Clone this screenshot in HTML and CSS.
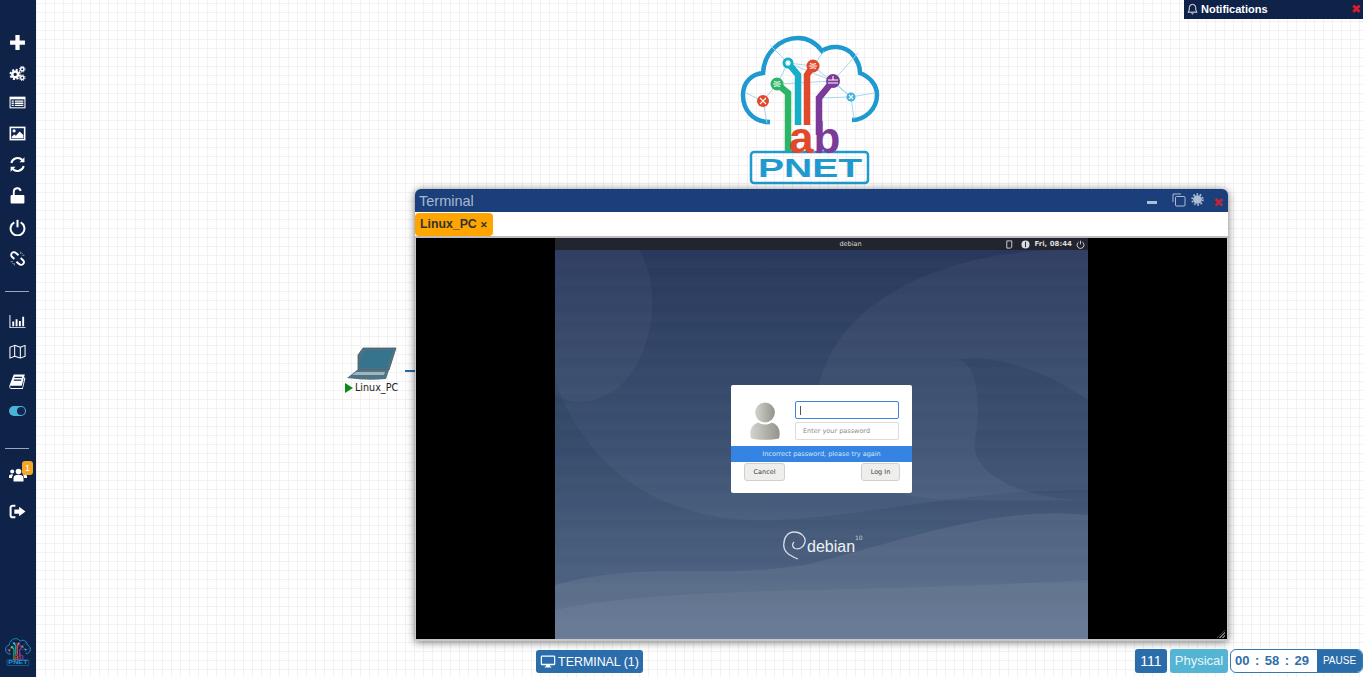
FILE: index.html
```html
<!DOCTYPE html>
<html lang="en">
<head>
    <meta charset="UTF-8">
    <title>PNETLab</title>
    <link rel="stylesheet" href="styles.css">
</head>
<body>
    <nav class="sidebar">
        <a class="side-btn">
            <svg viewBox="0 0 16 16"><path d="M6 1h4v5h5v4h-5v5H6v-5H1V6h5z" fill="#fff"/></svg>
        </a>
        <a class="side-btn">
            <svg viewBox="0 0 18 18">
                <circle cx="6.500" cy="10" r="3" fill="none" stroke="#fff" stroke-width="2.500"/>
                <circle cx="6.500" cy="10" r="5" fill="none" stroke="#fff" stroke-width="2" stroke-dasharray="2.200 1.730"/>
                <circle cx="14" cy="4.500" r="1.800" fill="none" stroke="#fff" stroke-width="1.500"/>
                <circle cx="14" cy="13.500" r="1.800" fill="none" stroke="#fff" stroke-width="1.500"/>
                <circle cx="14" cy="4.500" r="3" fill="none" stroke="#fff" stroke-width="1" stroke-dasharray="1.300 1.050"/>
                <circle cx="14" cy="13.500" r="3" fill="none" stroke="#fff" stroke-width="1" stroke-dasharray="1.300 1.050"/>
            </svg>
        </a>
        <a class="side-btn up2">
            <svg viewBox="0 0 16 16">
                <path d="M0.500 2.500h15v11h-15z" fill="#fff"/>
                <path d="M1.500 5h13v7.500h-13z" fill="#12264f"/>
                <path d="M2.500 6h2v1.200h-2zM2.500 8.100h2v1.200h-2zM2.500 10.200h2v1.200h-2zM5.500 6h8v1.200h-8zM5.500 8.100h8v1.200h-8zM5.500 10.200h8v1.200h-8z" fill="#fff"/>
            </svg>
        </a>
        <a class="side-btn">
            <svg viewBox="0 0 16 16">
                <path d="M0.500 1.500h15v13h-15z" fill="#fff"/>
                <path d="M2 3h12v10H2z" fill="#12264f"/>
                <circle cx="4.800" cy="5.500" r="1.500" fill="#fff"/>
                <path d="M2.500 12.500v-1.500l2.500-2 1.500 1 3.500-4 3.500 3.500v3z" fill="#fff"/>
            </svg>
        </a>
        <a class="side-btn">
            <svg viewBox="0 0 16 16" fill="none" stroke="#fff" stroke-width="1.900">
                <path d="M2.200 6.500A6 6 0 0 1 12.500 3.800"/>
                <path d="M13.800 9.500A6 6 0 0 1 3.500 12.200"/>
                <path d="M14.500 1.200v4.600h-4.600z" fill="#fff" stroke="none"/>
                <path d="M1.500 14.800v-4.600h4.600z" fill="#fff" stroke="none"/>
            </svg>
        </a>
        <a class="side-btn">
            <svg viewBox="0 0 16 16">
                <path d="M2.500 7.500h11a1 1 0 0 1 1 1v6a1 1 0 0 1-1 1h-11a1 1 0 0 1-1-1v-6a1 1 0 0 1 1-1z" fill="#fff"/>
                <path d="M4.500 7.500V4.500a3.300 3.300 0 0 1 6.500-0.800" fill="none" stroke="#fff" stroke-width="1.800"/>
            </svg>
        </a>
        <a class="side-btn down1">
            <svg viewBox="0 0 16 16" fill="none" stroke="#fff" stroke-width="1.900">
                <path d="M5 3.200a6.500 6.500 0 1 0 6 0"/>
                <path d="M8 0.800v7"/>
            </svg>
        </a>
        <a class="side-btn">
            <svg viewBox="0 0 16 16" fill="none" stroke="#fff" stroke-width="1.800">
                <path d="M9 5L6.500 2.800a2.500 2.500 0 0 0-3.700 3.600L5 8.500"/>
                <path d="M7 11l2.500 2.200a2.500 2.500 0 0 0 3.700-3.600L11 7.500"/>
                <path d="M11 1.500v2M14.500 5h-2M12.800 2.800l-1 1M5 14.500v-2M1.500 11h2M3.200 13.200l1-1" stroke="#9fb0cc" stroke-width="0.800"/>
            </svg>
        </a>

        <hr class="side-line first">

        <a class="side-btn short">
            <svg viewBox="0 0 18 16">
                <path d="M0.500 1h1v13h16v1h-17z" fill="#fff"/>
                <path d="M3.500 8h2v5h-2zM7 5.500h2V13H7zM10.500 7.500h2V13h-2zM14 3h2v10h-2z" fill="#fff"/>
            </svg>
        </a>
        <a class="side-btn short">
            <svg viewBox="0 0 18 16" fill="none" stroke="#fff" stroke-width="1.100" stroke-linejoin="round">
                <path d="M1 3.500l5-2 6 2 5-2v11.500l-5 2-6-2-5 2z"/>
                <path d="M6 1.500v11.500M12 3.500v11.500"/>
            </svg>
        </a>
        <a class="side-btn short">
            <svg viewBox="0 0 16 16">
                <path d="M4.500 1.500h10.500l-0.500 1-2.500 9.500H1.500c-1 1.300-0.500 2 0.500 2h10.500l0.300-1 1.700-9 1 .7-2.500 10.300H2C0.500 15 0 13 0.500 11.500z" fill="#fff"/>
                <path d="M5.300 3.500l-0.300 1.200h7l0.300-1.200zM4.700 6l-0.300 1.200h7l0.300-1.200z" fill="#12264f"/>
            </svg>
        </a>
        <a class="side-btn short">
            <span class="toggle"><span class="toggle-knob"></span></span>
        </a>

        <hr class="side-line second">

        <a class="side-btn users">
            <svg viewBox="0 0 18 16">
                <circle cx="9.500" cy="5" r="2.800" fill="#fff"/>
                <circle cx="3.200" cy="5" r="2" fill="#fff"/>
                <circle cx="15.300" cy="5" r="2" fill="#fff"/>
                <path d="M4.500 15v-3.500c0-2 2-3.200 5-3.200s5 1.200 5 3.200V15z" fill="#fff"/>
                <path d="M0 11.500v-1.500c0-1.500 1-2.300 3.300-2.300l0.700 0.600-1 2.200v1zM18 11.500v-1.500c0-1.500-1-2.300-3.300-2.300l-0.700 0.600 1 2.200v1z" fill="#fff"/>
            </svg>
            <span class="badge">1</span>
        </a>
        <a class="side-btn logout">
            <svg viewBox="0 0 16 16">
                <path d="M6 2.500H3.500A2 2 0 0 0 1.500 4.500v7a2 2 0 0 0 2 2H6" fill="none" stroke="#fff" stroke-width="1.900"/>
                <path d="M9.500 3.500l6 4.500-6 4.500V10H5V6h4.500z" fill="#fff"/>
            </svg>
        </a>

        <svg class="side-logo" viewBox="0 0 140 150"><use href="#pnetLogo"/></svg>
    </nav>

    <svg class="main-logo" viewBox="0 0 140 150">
        <g id="pnetLogo">
            <path d="M30 87C12 87 3 74 3 60C3 47 12 39 23 38C24 18 40 3 58 3C68 3 76 8 82 16C90 10 105 10 113 20C118 26 120 32 120 38C130 42 137 50 137 60C137 74 125 85 112 85" fill="none" stroke="#1f9ad1" stroke-width="4.500"/>
            <g fill="none" stroke="#9fd2ea" stroke-width="0.900">
                <path d="M6 58L23 66L37 49L48 28L30 10"/>
                <path d="M23 66L27 88"/>
                <path d="M48 28L73 31L84 16"/>
                <path d="M37 49L93 46L111 62L134 58"/>
                <path d="M48 28L93 46L118 18"/>
                <path d="M73 31L111 62L114 84"/>
                <path d="M77 63L111 62"/>
            </g>
            <g fill="none" stroke-width="6.500">
                <path d="M37 49L48 58V118" stroke="#2cb566"/>
                <path d="M48 28L58 40V90" stroke="#17afc7"/>
                <path d="M73 31L67 40V90" stroke="#e0492b"/>
                <path d="M93 46L79 63V100" stroke="#7c3b98"/>
            </g>
            <circle cx="23" cy="66" r="6" fill="#e0492b"/>
            <circle cx="37" cy="49" r="6.500" fill="#2cb566"/>
            <circle cx="48" cy="28" r="5.500" fill="#17afc7"/>
            <circle cx="73" cy="31" r="6.500" fill="#e0492b"/>
            <circle cx="93" cy="46" r="7" fill="#7c3b98"/>
            <circle cx="111" cy="62" r="4.500" fill="#3db5e0"/>
            <g stroke="#fff" stroke-width="1.100" fill="none">
                <path d="M20 63l6 6M26 63l-6 6"/>
                <path d="M33 49h8M34 46.500q3 1.500 6 0M34 51.500q3-1.500 6 0"/>
                <path d="M45 28h6M48 25v6M46 26l4 4M50 26l-4 4"/>
                <path d="M69 31h8M70 28.500q3 1.500 6 0M70 33.500q3-1.500 6 0"/>
                <path d="M88 45h10M88 48h10M93 41v4"/>
                <path d="M109 60l4 4M113 60l-4 4"/>
            </g>
            <rect x="11" y="117" width="117" height="31" rx="3" fill="none" stroke="#1f9ad1" stroke-width="2.500"/>
            <text class="logo-lab" x="49" y="118"><tspan class="lab-a">a</tspan><tspan class="lab-b">b</tspan></text>
            <text class="logo-pnet" x="18" y="142" textLength="104" lengthAdjust="spacingAndGlyphs">PNET</text>
        </g>
    </svg>

    <div class="notifications">
        <svg class="bell" viewBox="0 0 12 14" fill="none" stroke="#fff" stroke-width="1">
            <path d="M1 11c1.300-1 1.500-2.500 1.500-5a3.500 3.500 0 0 1 7 0c0 2.500 0.200 4 1.500 5z"/>
            <path d="M5 12.300a1.100 1.100 0 0 0 2 0"/>
        </svg>
        <span class="notif-title">Notifications</span>
        <span class="notif-close">&#10006;</span>
    </div>

    <div class="node">
        <svg class="node-icon" viewBox="0 0 50 34">
            <path d="M11 8L16 1H49L42 23H11Z" fill="#55717f" stroke="#3f5a68" stroke-width="0.800"/>
            <path d="M14 9L18 3H46L40 21H13Z" fill="#35748c"/>
            <path d="M0 31L10 23H42L39 32Q20 34 0 31Z" fill="#4f7383"/>
            <path d="M9 25H38L37 28H5Z" fill="#9db5c0"/>
        </svg>
        <div class="node-label"><span class="node-run"></span>Linux_PC</div>
    </div>
    <div class="node-link"></div>

    <section class="term-win">
        <header class="term-head">
            <span class="term-title">Terminal</span>
            <span class="win-tools">
                <span class="tool-min"></span>
                <svg class="tool-copy" viewBox="0 0 14 14" fill="none" stroke="#aebdd6" stroke-width="1">
                    <path d="M1 9V1h8"/>
                    <rect x="3.500" y="3.500" width="9.500" height="9.500" rx="1"/>
                </svg>
                <svg class="tool-gear" viewBox="0 0 14 14">
                    <circle cx="7" cy="7" r="4.700" fill="#aebdd6"/>
                    <circle cx="7" cy="7" r="5.700" fill="none" stroke="#aebdd6" stroke-width="2" stroke-dasharray="1.800 1.780"/>
                </svg>
                <span class="tool-close">&#10006;</span>
            </span>
        </header>
        <div class="term-tabs">
            <span class="term-tab">Linux_PC <small>&#10005;</small></span>
        </div>
        <div class="term-screen">
            <div class="desktop">
                <svg class="desk-art" viewBox="0 0 533 389" preserveAspectRatio="none">
                    <defs>
                        <linearGradient id="deskBg" x1="0" y1="0" x2="0" y2="1">
                            <stop offset="0" stop-color="#28385c"/>
                            <stop offset="0.5" stop-color="#3c5171"/>
                            <stop offset="1" stop-color="#5f7493"/>
                        </linearGradient>
                    </defs>
                    <rect width="533" height="389" fill="url(#deskBg)"/>
                    <path d="M0 0H85C105 40 100 90 75 125C55 150 25 160 0 145Z" fill="#fff" fill-opacity="0.035"/>
                    <path d="M0 130C30 220 110 275 220 270C330 265 400 240 533 240V389H0Z" fill="#0d1c3c" fill-opacity="0.1"/>
                    <path d="M533 0C410 -5 290 40 265 130C250 195 300 250 400 250H533Z" fill="#fff" fill-opacity="0.04"/>
                    <path d="M396 112C420 100 428 150 420 190C414 225 470 250 533 250V150C490 120 430 100 396 112Z" fill="#0d1c3c" fill-opacity="0.13"/>
                    <path d="M0 335C90 310 150 330 250 315C350 290 440 255 533 265V389H0Z" fill="#fff" fill-opacity="0.07"/>
                    <path d="M0 389V360C120 335 260 345 533 330V389Z" fill="#fff" fill-opacity="0.05"/>
                </svg>
                <div class="desk-top">
                    <span class="desk-name">debian</span>
                    <span class="desk-status">
                        <svg class="doc-icon" viewBox="0 0 8 10" fill="none" stroke="#ddd" stroke-width="1"><path d="M1 1h5.500v7L5 9H1z"/></svg>
                        <svg viewBox="0 0 10 10"><circle cx="5" cy="5" r="4.500" fill="#ddd"/><path d="M5 2v6" stroke="#26304a" stroke-width="1.200"/></svg>
                        <span>Fri, 08:44</span>
                        <svg viewBox="0 0 10 10" fill="none" stroke="#ddd" stroke-width="1"><path d="M3 2.300a3.800 3.800 0 1 0 4 0M5 0.800v4"/></svg>
                    </span>
                </div>
                <div class="login-box">
                    <div class="login-main">
                        <svg class="avatar" viewBox="0 0 34 40">
                            <defs>
                                <linearGradient id="userFill" x1="0" y1="0" x2="1" y2="0">
                                    <stop offset="0" stop-color="#d4d4ce"/>
                                    <stop offset="1" stop-color="#93938c"/>
                                </linearGradient>
                            </defs>
                            <circle cx="17" cy="11.500" r="10.500" fill="url(#userFill)"/>
                            <path d="M2 39C0 30 3 24 10 22C14 25 20 25 24 22C31 24 34 30 32 39C25 41 9 41 2 39Z" fill="url(#userFill)"/>
                        </svg>
                        <div class="login-fields">
                            <div class="login-input active"><span class="caret"></span></div>
                            <div class="login-input">Enter your password</div>
                        </div>
                    </div>
                    <div class="login-error">Incorrect password, please try again</div>
                    <div class="login-actions">
                        <span class="login-btn cancel">Cancel</span>
                        <span class="login-btn signin">Log In</span>
                    </div>
                </div>
                <div class="debian-mark">
                    <svg viewBox="0 0 24 30" fill="none" stroke="#d7dde6" stroke-width="1.300">
                        <path d="M15 28C5 24 0 20 0.800 13C1 6 5 1 11 1C18 1 23 6 22 11C21 16 16 19 12 17.500C9 16 9 13 11 11"/>
                    </svg>
                    <span class="debian-name">debian</span>
                    <sup class="debian-ver">10</sup>
                </div>
            </div>
            <span class="resize-grip"></span>
        </div>
    </section>

    <a class="terminal-btn">
        <svg viewBox="0 0 16 14" fill="#fff">
            <path d="M1.500 0.500h13a1.300 1.300 0 0 1 1.300 1.300v7.900a1.300 1.300 0 0 1-1.300 1.300H10v1.500h1.500v1h-7v-1H6V11H1.500A1.300 1.300 0 0 1 0.200 9.700V1.800A1.300 1.300 0 0 1 1.500 0.500zM1.500 1.800v7.500h13V1.800z" fill-rule="evenodd"/>
        </svg>
        TERMINAL (1)
    </a>

    <div class="lab-status">
        <span class="stat-id">111</span>
        <span class="stat-mode">Physical</span>
        <div class="timer">
            <span class="timer-digits"><b>00</b><b>:</b><b>58</b><b>:</b><b>29</b></span>
            <span class="timer-pause">PAUSE</span>
        </div>
    </div>
</body>
</html>
```

FILE: styles.css
```css
html, body {
    margin: 0;
    height: 100%;
    overflow: hidden;
}

body {
    position: relative;
    font-family: "Liberation Sans", Arial, sans-serif;
    background-color: #fff;
    background-image:
        linear-gradient(#f3f1f1 1px, transparent 1px),
        linear-gradient(90deg, #f3f1f1 1px, transparent 1px);
    background-size: 9px 9px;
    background-position: 0 3px;
}

.logo-lab {
    font-family: "Liberation Sans", sans-serif;
    font-weight: 700;
    font-size: 44px;
}

.lab-a {
    fill: #e0492b;
}

.lab-b {
    fill: #7c3b98;
}

.logo-pnet {
    font-family: "Liberation Sans", sans-serif;
    font-weight: 700;
    font-size: 26px;
    fill: #1f9ad1;
}

.sidebar {
    position: absolute;
    left: 0;
    top: 0;
    bottom: 0;
    width: 36px;
    background: #0f2349;
    display: flex;
    flex-direction: column;
    align-items: center;
    padding-top: 27px;
    box-sizing: border-box;
}

.side-btn {
    height: 31px;
    width: 36px;
    display: flex;
    align-items: center;
    justify-content: center;
    position: relative;
    flex: none;
}

.side-btn.short {
    height: 30px;
}

.side-btn svg {
    width: 17px;
    height: 17px;
    margin-left: -1px;
}

.up2 {
    margin-top: -2px;
}

.down1 {
    margin-top: 1px;
}

.side-line {
    width: 24px;
    height: 1px;
    margin: 0 0 0 -2px;
    border: 0;
    background: #9aa6bb;
    flex: none;
}

.side-line.first {
    margin-top: 17px;
    margin-bottom: 14px;
}

.side-line.second {
    margin-top: 22px;
    margin-bottom: 10px;
}

.toggle {
    width: 17px;
    height: 10px;
    border-radius: 5px;
    background: #49b4d8;
    display: flex;
    justify-content: flex-end;
    align-items: center;
    padding-right: 1px;
    box-sizing: border-box;
    margin-left: -1px;
}

.toggle-knob {
    width: 8px;
    height: 8px;
    border-radius: 50%;
    background: #12264f;
}

.users svg {
    width: 18px;
    margin-left: 0;
}

.badge {
    position: absolute;
    left: 22px;
    top: 2px;
    width: 11px;
    height: 14px;
    border-radius: 3px;
    background: #f5a623;
    color: #fff;
    font-size: 9px;
    line-height: 14px;
    text-align: center;
}

.logout {
    margin-top: 6px;
}

.side-logo {
    width: 26px;
    height: 28px;
    margin-top: auto;
    margin-bottom: 11px;
    flex: none;
}

.main-logo {
    position: absolute;
    left: 740px;
    top: 35px;
    width: 140px;
    height: 150px;
}

.notifications {
    position: absolute;
    right: 0;
    top: 0;
    width: 179px;
    height: 19px;
    background: #0f2349;
    color: #fff;
    display: flex;
    align-items: center;
    padding: 0 2px 2px 3px;
    box-sizing: border-box;
}

.bell {
    width: 11px;
    height: 13px;
    margin-right: 3px;
}

.notif-title {
    font-size: 11px;
    font-weight: 700;
    flex: 1;
}

.notif-close {
    color: #e6192b;
    font-size: 12px;
    line-height: 12px;
}

.node {
    position: absolute;
    left: 345px;
    top: 347px;
    width: 56px;
}

.node-icon {
    display: block;
    width: 50px;
    height: 34px;
    margin-left: 2px;
}

.node-label {
    display: flex;
    align-items: center;
    font-family: "DejaVu Sans", sans-serif;
    font-size: 9.600px;
    color: #222;
    margin-top: 1px;
    white-space: nowrap;
}

.node-run {
    width: 0;
    height: 0;
    border-left: 8px solid #0c8a17;
    border-top: 5px solid transparent;
    border-bottom: 5px solid transparent;
    margin-right: 2px;
}

.node-link {
    position: absolute;
    left: 405px;
    top: 370px;
    width: 11px;
    height: 2px;
    background: #2b6ca8;
}

.term-win {
    position: absolute;
    left: 415px;
    top: 189px;
    width: 813px;
    height: 452px;
    border-radius: 6px 6px 0 0;
    box-shadow: 0 1px 9px rgba(0, 0, 0, 0.55);
    display: flex;
    flex-direction: column;
    background: #c8c8c8;
}

.term-head {
    height: 23px;
    flex: none;
    background: #1b3f7a;
    border-radius: 6px 6px 0 0;
    display: flex;
    align-items: center;
    justify-content: space-between;
    padding: 1px 4px 0;
    box-sizing: border-box;
}

.term-title {
    color: #a9b8d0;
    font-size: 14.500px;
}

.win-tools {
    display: flex;
    align-items: center;
}

.tool-min {
    width: 10px;
    height: 3px;
    background: #aebdd6;
    margin-right: 15px;
    margin-top: 3px;
}

.tool-copy {
    width: 14px;
    height: 14px;
    margin-right: 5px;
    margin-top: -3px;
}

.tool-gear {
    width: 13px;
    height: 13px;
    margin-right: 9px;
    margin-top: -3px;
}

.tool-close {
    color: #b5283c;
    font-size: 13px;
    line-height: 13px;
    margin-top: 3px;
}

.term-tabs {
    height: 24px;
    flex: none;
    background: #fff;
    border-bottom: 2px solid #bdbdbd;
}

.term-tab {
    display: inline-block;
    height: 23px;
    margin-top: 1px;
    line-height: 23px;
    padding: 0 5px;
    background: #ffa500;
    border-radius: 4px;
    color: #333;
    font-size: 12.300px;
    font-weight: 700;
}

.term-tab small {
    font-size: 9px;
}

.term-screen {
    flex: 1;
    margin: 0 1px 2px;
    background: #000;
    display: flex;
    justify-content: center;
    position: relative;
}

.desktop {
    width: 533px;
    position: relative;
    overflow: hidden;
    font-family: "DejaVu Sans", sans-serif;
    background: #26365a;
}

.desk-art {
    position: absolute;
    left: 0;
    top: 12px;
    width: 100%;
    height: 389px;
}

.desktop::after {
    content: "";
    position: absolute;
    inset: 12px 0 0 0;
    background: repeating-linear-gradient(#0000 0 9px, rgba(255, 255, 255, 0.012) 9px 18px);
}

.desk-top {
    position: relative;
    height: 12px;
    background: #22252f;
    color: #ddd;
    font-size: 6.500px;
    text-align: center;
    text-indent: 58px;
    line-height: 12px;
}

.desk-status {
    position: absolute;
    right: 3px;
    top: 0;
    height: 12px;
    display: flex;
    align-items: center;
    gap: 4px;
    font-weight: 700;
    font-size: 7px;
    text-indent: 0;
}

.desk-status svg {
    width: 9px;
    height: 9px;
}

.desk-status .doc-icon {
    margin-right: 3px;
}

.login-box {
    position: absolute;
    z-index: 1;
    left: 176px;
    top: 147px;
    width: 181px;
    height: 108px;
    background: #fff;
    border-radius: 2px;
    display: flex;
    flex-direction: column;
    color: #555;
    font-size: 6.500px;
}

.login-main {
    height: 61px;
    display: flex;
    padding-top: 16px;
    padding-left: 18px;
    box-sizing: border-box;
}

.avatar {
    width: 32px;
    height: 39px;
    margin-right: 14px;
}

.login-fields {
    display: flex;
    flex-direction: column;
    gap: 3px;
    width: 104px;
}

.login-input {
    height: 18px;
    line-height: 17px;
    border: 1px solid #dcdcd8;
    border-radius: 2px;
    box-sizing: border-box;
    padding-left: 7px;
    color: #8a8a8a;
}

.login-input.active {
    border-color: #3f82d8;
    border-width: 1px 1.500px;
    display: flex;
    align-items: center;
    padding-left: 4px;
}

.caret {
    width: 1px;
    height: 9px;
    background: #555;
}

.login-error {
    height: 16px;
    line-height: 16px;
    background: #3584e4;
    color: #d4e4f7;
    text-align: center;
}

.login-actions {
    display: flex;
    justify-content: space-between;
    padding: 1px 12px 0 13px;
}

.login-btn {
    height: 18px;
    line-height: 17px;
    border: 1px solid #d0d0cc;
    border-radius: 3px;
    background: #eeeeec;
    box-sizing: border-box;
    text-align: center;
    color: #444;
}

.cancel {
    width: 41px;
}

.signin {
    width: 39px;
}

.debian-mark {
    position: absolute;
    z-index: 1;
    left: 228px;
    top: 293px;
    display: flex;
    align-items: flex-end;
    color: #eef1f5;
}

.debian-mark svg {
    width: 24px;
    height: 30px;
}

.debian-name {
    font-family: "Liberation Sans", sans-serif;
    font-size: 16px;
    line-height: 20px;
    margin-bottom: 4px;
}

.debian-ver {
    font-size: 6px;
    line-height: 1;
    align-self: flex-start;
    margin-top: 4px;
    color: #c5ceda;
}

.resize-grip {
    position: absolute;
    right: 2px;
    bottom: 1px;
    width: 8px;
    height: 8px;
    background: repeating-linear-gradient(135deg, transparent 0 1px, #777 1px 2px);
    clip-path: polygon(100% 0, 100% 100%, 0 100%);
}

.terminal-btn {
    position: absolute;
    left: 536px;
    top: 650px;
    width: 107px;
    height: 23px;
    background: #2b6cab;
    border-radius: 3px;
    color: #fff;
    font-size: 12.400px;
    display: flex;
    align-items: center;
    justify-content: center;
    gap: 2px;
}

.terminal-btn svg {
    width: 16px;
    height: 13px;
}

.lab-status {
    position: absolute;
    right: 0;
    top: 649px;
    display: flex;
    gap: 3px;
    color: #fff;
    font-size: 13px;
    line-height: 24px;
}

.stat-id {
    width: 32px;
    background: #2b6cab;
    border-radius: 3px;
    text-align: center;
    font-size: 14px;
}

.stat-mode {
    width: 58px;
    background: #53b4d3;
    border-radius: 3px;
    text-align: center;
    color: #e9f6fb;
}

.timer {
    width: 133px;
    margin-left: -1px;
    display: flex;
    border: 1px solid #3278b5;
    border-radius: 6px;
    box-sizing: border-box;
    background: #fff;
    overflow: hidden;
}

.timer-digits {
    flex: 1;
    display: flex;
    justify-content: space-between;
    padding: 0 8px 0 4px;
    color: #2f6ea8;
    font-weight: 700;
    font-size: 13px;
    line-height: 22px;
}

.timer-pause {
    width: 45px;
    background: #2b6cab;
    text-align: center;
    font-size: 10px;
    line-height: 22px;
}
```
